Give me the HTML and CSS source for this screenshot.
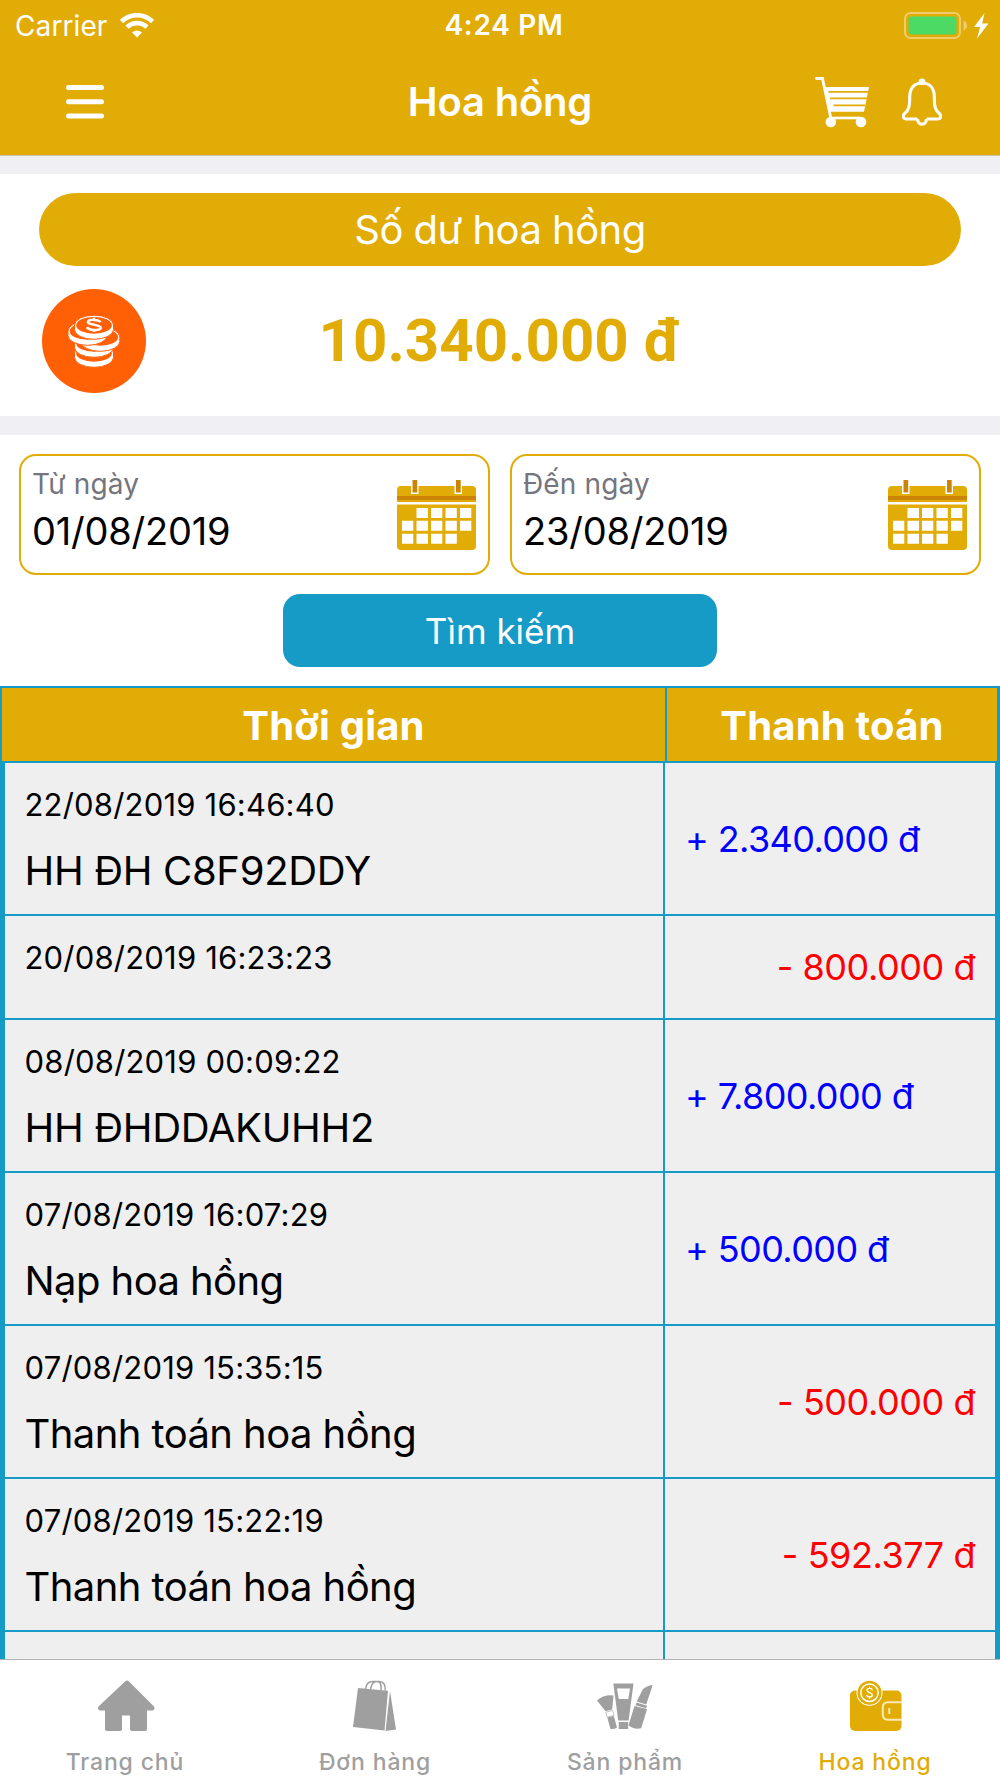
FILE: index.html
```html
<!DOCTYPE html>
<html lang="vi">
<head>
  <meta charset="UTF-8">
  <meta name="viewport" content="width=device-width, initial-scale=1.0">
  <title>Hoa hồng</title>
  <link rel="stylesheet" href="styles.css">
</head>
<body>
  <div class="app">
    <!-- Header -->
    <header class="header">
      <div class="status-bar">
        <div class="status-left">
          <span class="carrier">Carrier</span>
          <svg class="wifi" width="34" height="25" viewBox="0 0 34 25">
            <g fill="none" stroke="#fff">
              <path d="M1.5 8.6a22 22 0 0 1 31 0" stroke-width="4.6"/>
              <path d="M7 14.2a14.2 14.2 0 0 1 20 0" stroke-width="4.6"/>
            </g>
            <path d="M17 24.5l-5-5q5-4 10 0z" fill="#fff"/>
          </svg>
        </div>
        <span class="clock">4:24 PM</span>
        <div class="status-right">
          <svg width="85" height="27" viewBox="0 0 85 27">
            <rect x="1" y="1" width="55" height="25" rx="5.5" fill="none" stroke="#fff" stroke-opacity=".4" stroke-width="2"/>
            <rect x="4.5" y="4.5" width="48" height="18" rx="3" fill="#4cd964"/>
            <path d="M59.5 8.5q3.5 1.5 3.5 5t-3.5 5z" fill="#fff" fill-opacity=".4"/>
            <path d="M80.5 1L70 15h6.200L73 26.500 84.500 11.500h-6.300z" fill="#fff"/>
          </svg>
        </div>
      </div>
      <div class="nav-bar">
        <svg class="menu" width="38" height="34" viewBox="0 0 38 34">
          <path d="M2.5 2.5h33M2.5 16.7h33M2.5 31h33" stroke="#fff" stroke-width="5" stroke-linecap="round"/>
        </svg>
        <h1>Hoa hồng</h1>
        <div class="nav-actions">
          <svg width="55" height="52" viewBox="0 0 55 52">
            <path d="M1.500 2.500h6L16 43" fill="none" stroke="#fff" stroke-width="2.800" stroke-linecap="round"/>
            <path d="M8.500 11h45.500l-5 24.700H14z" fill="#fff"/>
            <path d="M13.500 15.800H53M15 22.300h37M18.500 29.300H50" stroke="#e1ac06" stroke-width="1.700"/>
            <path d="M16 42h29" stroke="#fff" stroke-width="2.600"/>
            <circle cx="15.800" cy="46" r="5.300" fill="#fff"/>
            <circle cx="46" cy="46" r="5.300" fill="#fff"/>
          </svg>
          <svg width="40" height="48" viewBox="0 0 40 48">
            <path d="M20 5C11.500 5 7.700 11 7.700 19c0 9-.7 13-5 16.500C.5 37.500.8 41 4 41h11.500M20 5c8.500 0 12.300 6 12.300 14 0 9 .7 13 5 16.500 2.200 2 1.900 5.500-1.300 5.500H24.500M15.500 41c.5 6.800 8.500 6.800 9 0" fill="none" stroke="#fff" stroke-width="3.100" stroke-linejoin="round"/>
            <circle cx="20" cy="3.800" r="3.300" fill="#fff"/>
          </svg>
        </div>
      </div>
    </header>

    <main class="content">
      <!-- Balance -->
      <section class="balance">
        <div class="balance-title">Số dư hoa hồng</div>
        <div class="balance-row">
          <svg class="coins" width="104" height="104" viewBox="0 0 104 104">
            <defs>
              <g id="coin">
                <path d="M-19.500 0a19.500 9.800 0 0 1 39 0v4.500a19.500 9.800 0 0 1-39 0z" fill="#fff" stroke="#ff5f05" stroke-width="1"/>
                <ellipse cy=".3" rx="17.800" ry="8.400" fill="#ff5f05"/>
              </g>
            </defs>
            <circle cx="52" cy="52" r="52" fill="#ff5f05"/>
            <use href="#coin" x="52" y="64"/>
            <use href="#coin" x="52" y="54"/>
            <use href="#coin" x="58.300" y="48"/>
            <use href="#coin" x="45.500" y="42"/>
            <use href="#coin" x="52" y="36"/>
            <path d="M58.500 33.300c-1-2.600-11.500-3.600-12.500-.6-.7 3.400 13 2.600 12.800 6.200-.8 3.200-12.200 2.600-13.800-.8M52 28.800v3M52 40v3" fill="none" stroke="#fff" stroke-width="2.500"/>
          </svg>
          <span class="balance-amount">10.340.000 đ</span>
        </div>
      </section>

      <!-- Date filter -->
      <section class="filter">
        <div class="date-fields">
          <div class="date-box">
            <div>
              <div class="date-label">Từ ngày</div>
              <div class="date-value">01/08/2019</div>
            </div>
            <svg class="calendar" width="79" height="70" viewBox="0 0 79 70">
              <defs>
                <g id="calendar">
                  <path d="M0 22V10q0-4 4-4h71q4 0 4 4v12z" fill="#e1ac06"/>
                  <path d="M0 16h79v4H0z" fill="#cc8306"/>
                  <path d="M0 24.500h79V66q0 4-4 4H4q-4 0-4-4z" fill="#e1ac06"/>
                  <path d="M14 0h7.500v14H14zM57.500 0H65v14h-7.500z" fill="#fff"/>
                  <path d="M15.500 0h4.700v12.500h-4.700zM59 0h4.700v12.500H59z" fill="#cc8306"/>
                  <path d="M19.500 28H31v10H19.500zM34 28h11.300v10H34zM48.500 28h11.300v10H48.500zM63 28h11.300v10H63zM5 40.700h11.300v10H5zM19.500 40.700H31v10H19.500zM34 40.700h11.300v10H34zM48.500 40.700h11.300v10H48.500zM63 40.700h11.300v10H63zM5 53.700h11.300v10H5zM19.500 53.700H31v10H19.500zM34 53.700h11.300v10H34zM48.500 53.700h11.300v10H48.500z" fill="#fff"/>
                </g>
              </defs>
              <use href="#calendar"/>
            </svg>
          </div>
          <div class="date-box">
            <div>
              <div class="date-label">Đến ngày</div>
              <div class="date-value">23/08/2019</div>
            </div>
            <svg class="calendar" width="79" height="70" viewBox="0 0 79 70"><use href="#calendar"/></svg>
          </div>
        </div>
        <button class="search-btn">Tìm kiếm</button>
      </section>

      <!-- History -->
      <section class="history">
        <div class="history-head">
          <div>Thời gian</div>
          <div>Thanh toán</div>
        </div>
        <div class="history-body">
          <div class="row">
            <div class="info"><p class="time">22/08/2019 16:46:40</p><p class="note">HH ĐH C8F92DDY</p></div>
            <div class="amount plus">+ 2.340.000 đ</div>
          </div>
          <div class="row short">
            <div class="info"><p class="time">20/08/2019 16:23:23</p></div>
            <div class="amount minus">- 800.000 đ</div>
          </div>
          <div class="row">
            <div class="info"><p class="time">08/08/2019 00:09:22</p><p class="note">HH ĐHDDAKUHH2</p></div>
            <div class="amount plus">+ 7.800.000 đ</div>
          </div>
          <div class="row">
            <div class="info"><p class="time">07/08/2019 16:07:29</p><p class="note viet">Nạp hoa hồng</p></div>
            <div class="amount plus">+ 500.000 đ</div>
          </div>
          <div class="row">
            <div class="info"><p class="time">07/08/2019 15:35:15</p><p class="note viet">Thanh toán hoa hồng</p></div>
            <div class="amount minus">- 500.000 đ</div>
          </div>
          <div class="row">
            <div class="info"><p class="time">07/08/2019 15:22:19</p><p class="note viet">Thanh toán hoa hồng</p></div>
            <div class="amount minus">- 592.377 đ</div>
          </div>
          <div class="row">
            <div class="info"></div>
            <div class="amount"></div>
          </div>
        </div>
      </section>
    </main>

    <!-- Tab bar -->
    <nav class="tab-bar">
      <a class="tab">
        <svg width="60" height="52" viewBox="0 0 60 52">
          <path d="M30.300 1.300q1.700-1.500 3.400 0L59 26.500q1.500 3.500-1.500 4H52V49q0 2-2 2H37q-2 0-2-2V35.500h-8V49q0 2-2 2H12q-2 0-2-2V30.500H5q-3-.5-1.500-4z" fill="currentColor"/>
        </svg>
        <span>Trang chủ</span>
      </a>
      <a class="tab">
        <svg width="60" height="52" viewBox="0 0 60 52">
          <path d="M13 8l30 2.700-3.500 39.800L8 47zM45 11l6 38.500L40.500 51z" fill="currentColor"/>
          <path d="M20.500 9q1-7.500 7-7.500h4.500q5 0 4 8.500M25.500 9q1.500-7.500 6-7.500h3q6 0 5.800 9" fill="none" stroke="currentColor" stroke-width="1.500"/>
        </svg>
        <span>Đơn hàng</span>
      </a>
      <a class="tab">
        <svg width="60" height="52" viewBox="0 0 60 52">
          <g fill="currentColor">
            <path d="M2 20.500q6.500-6 16.500-5l-1.300 14-6.700 1.800zM12.300 37.500l6.500-1.500 3.200 11.500q-2.500 2-6.500 1.500z"/>
            <path fill-rule="evenodd" d="M18.300 3.500h20.200L33.600 40.500H23.200zM22 8.500l1.800 10.500h9.500L35 8.500z"/>
            <path d="M23.700 42h9.500v7h-9.500zM57.700 5q-6 .5-10 4.500l-6 12 9.500 3zM41.500 22.500l10.500 3.200-1 2.500-10.500-3zM39.500 26l12.500 3-1.500 5.300-4.300 14q-7.500 1.500-12.700-3z"/>
          </g>
          <path d="M10.800 32.200l6.800-1.800 1.500 5-7 1.700z" fill="none" stroke="currentColor" stroke-width=".6"/>
        </svg>
        <span>Sản phẩm</span>
      </a>
      <a class="tab active">
        <svg width="60" height="52" viewBox="0 0 60 52">
          <rect x="5" y="10.500" width="51.500" height="40.500" rx="5" fill="currentColor"/>
          <circle cx="24.500" cy="12.700" r="13" fill="#fff"/>
          <circle cx="24.500" cy="12.700" r="12" fill="currentColor"/>
          <circle cx="24.500" cy="12.700" r="8.700" fill="none" stroke="#fff" stroke-width="1.500"/>
          <path d="M27.300 10.300c-.5-2.600-5.300-2.600-5.300 0 0 2.800 5.300 1.700 5.300 4.600 0 2.600-5.300 2.600-5.500 0M24.600 6.800v2M24.600 16.700v2" fill="none" stroke="#fff" stroke-width="1.300"/>
          <path d="M57 22.300H43q-5.200 0-5.200 5.200v7q0 5.200 5.200 5.200h14M44.300 28v6" fill="none" stroke="#fbe9b6" stroke-width="2"/>
        </svg>
        <span>Hoa hồng</span>
      </a>
    </nav>
  </div>
</body>
</html>
```

FILE: styles.css
```css
* {
  box-sizing: border-box;
}
body {
  font-family: 'Inter', 'Roboto', sans-serif;
  margin: 0;
  color: #000;
  background: #fff;
}
h1, p {
  margin: 0;
}
.app {
  display: flex;
  flex-direction: column;
  width: 1000px;
  height: 1778px;
  overflow: hidden;
}

/* Header */
.header {
  flex: none;
  height: 156px;
  background: #e1ac06;
  border-bottom: 1px solid #c9c3b8;
  color: #fff;
}
.status-bar, .nav-bar {
  display: grid;
  grid-template-columns: 1fr auto 1fr;
  align-items: center;
}
.status-bar {
  height: 50px;
  padding: 0 11px 0 15px;
}
.status-left {
  display: flex;
  align-items: center;
  gap: 13px;
}
.carrier {
  font-size: 28px;
  letter-spacing: 0.1px;
  line-height: 34px;
  padding-top: 1px;
}
.clock {
  padding-left: 4px;
  font-size: 28px;
  font-weight: 600;
  letter-spacing: 0.7px;
}
.status-right {
  display: flex;
  justify-content: flex-end;
}
.nav-bar {
  height: 104px;
  padding: 0 58px;
}
.menu {
  margin-left: 8px;
}
.nav-bar h1 {
  font-size: 40px;
  font-weight: 600;
  line-height: 50px;
  letter-spacing: -0.2px;
}
.nav-actions {
  display: flex;
  justify-content: flex-end;
  align-items: center;
  gap: 32px;
}

.content {
  flex: 1;
  min-height: 0;
  overflow: hidden;
  background: #efeff4;
}

/* Balance */
.balance {
  margin-top: 18px;
  padding: 19px 39px 23px;
  background: #fff;
}
.balance-title {
  height: 73px;
  line-height: 74px;
  border-radius: 37px;
  background: #e1ac06;
  color: #fff;
  font-size: 40px;
  letter-spacing: -0.55px;
  text-align: center;
}
.balance-row {
  display: grid;
  grid-template-columns: 108px 1fr 108px;
  align-items: center;
  margin-top: 23px;
}
.coins {
  margin-left: 3px;
}
.balance-amount {
  font-family: 'Roboto', sans-serif;
  font-size: 60px;
  font-weight: 700;
  line-height: 70px;
  color: #e1ac06;
  text-align: center;
}

/* Date filter */
.filter {
  margin-top: 19px;
  padding: 19px;
  background: #fff;
}
.date-fields {
  display: grid;
  grid-template-columns: 1fr 1fr;
  gap: 20px;
}
.date-box {
  display: flex;
  justify-content: space-between;
  height: 121px;
  padding: 8px 12px 0 11px;
  border: 2px solid #e1ac06;
  border-radius: 17px;
}
.date-label {
  font-size: 28px;
  line-height: 41px;
  letter-spacing: 0.15px;
  color: #75757d;
}
.date-value {
  font-size: 38px;
  line-height: 53px;
  letter-spacing: -0.2px;
}
.calendar {
  margin-top: 16px;
}
.search-btn {
  display: block;
  width: 434px;
  height: 73px;
  margin: 19px auto 0;
  padding: 0;
  border: none;
  border-radius: 17px;
  background: #169bc7;
  color: #fff;
  font-family: inherit;
  font-size: 35px;
}

/* History */
.history-head {
  display: grid;
  grid-template-columns: 663px 1fr;
  height: 77px;
  border: 2px solid #169bc7;
  border-width: 2px 3px 2px 2px;
  background: #e1ac06;
  color: #fff;
  font-size: 40px;
  font-weight: 700;
  letter-spacing: 0.2px;
  line-height: 75px;
  text-align: center;
}
.history-head div + div {
  border-left: 2px solid #169bc7;
}
.history-body {
  border: 5px solid #169bc7;
  border-width: 0 5px;
}
.row {
  display: grid;
  grid-template-columns: 658px 1fr;
  height: 153px;
  border-bottom: 2px solid #169bc7;
  background: #efefef;
}
.row.short {
  height: 104px;
}
.info {
  padding: 22px 0 0 19.5px;
}
.time {
  font-size: 31px;
  line-height: 40px;
  letter-spacing: 0.2px;
}
.note {
  margin-top: 21px;
  font-size: 40px;
  line-height: 50px;
  letter-spacing: -0.33px;
}
.note.viet {
  letter-spacing: -0.57px;
}
.amount {
  display: flex;
  align-items: center;
  padding: 0 20px;
  border-left: 2px solid #169bc7;
  font-size: 36px;
  letter-spacing: -0.6px;
}
.plus {
  color: #00f;
}
.minus {
  justify-content: flex-end;
  color: #f00;
  letter-spacing: -0.45px;
}

/* Tab bar */
.tab-bar {
  flex: none;
  display: grid;
  grid-template-columns: repeat(4, 1fr);
  height: 119px;
  border-top: 1px solid #b4b4b4;
}
.tab {
  display: flex;
  flex-direction: column;
  align-items: center;
  padding-top: 20px;
  color: #9f9f9f;
  font-size: 23px;
  font-weight: 500;
  line-height: 30px;
  letter-spacing: 0.85px;
}
.tab span {
  margin-top: 15px;
}
.tab.active {
  color: #e1ac06;
}
```
